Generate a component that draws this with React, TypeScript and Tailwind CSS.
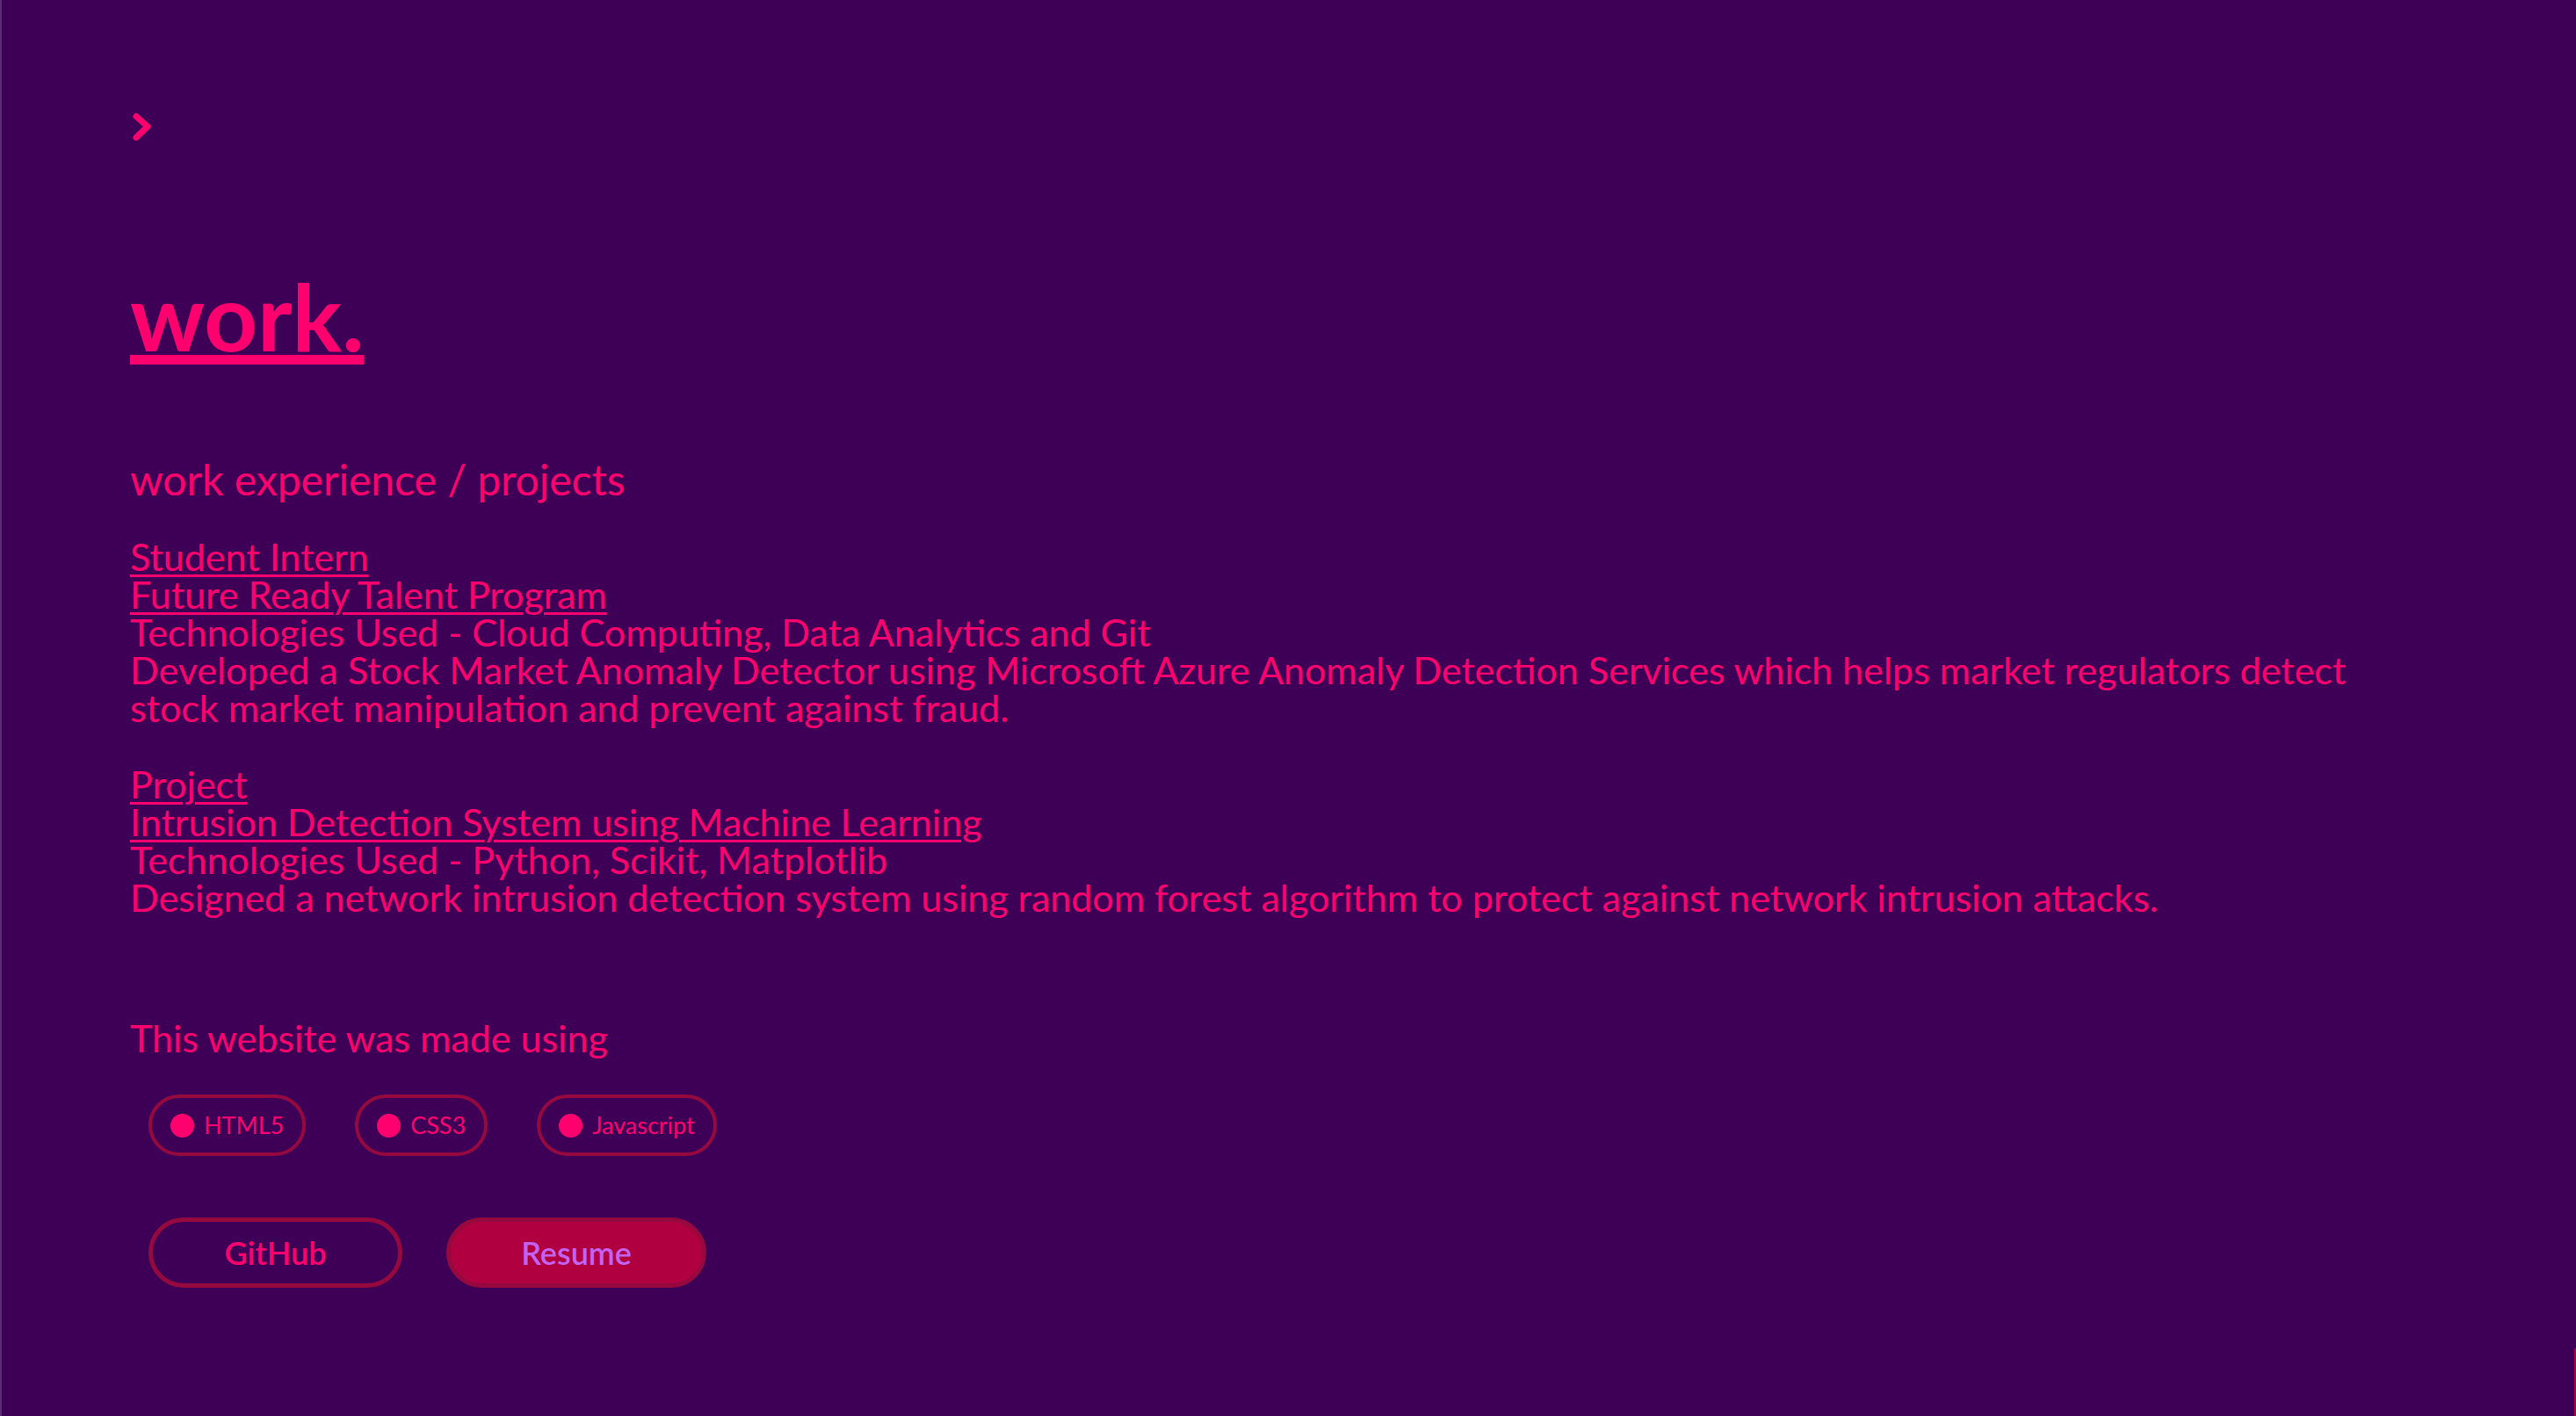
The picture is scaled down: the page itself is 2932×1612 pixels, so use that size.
import React from 'react';

const pink = 'text-[#ff006e]';

const techs = ['HTML5', 'CSS3', 'Javascript'];

const Entry = ({ role, title, tech, desc }: { role: string; title: string; tech: string; desc: string }) => (
  <div className="text-[43px] leading-[43px]">
    <a href="#" className="block w-fit underline decoration-[3px] underline-offset-[4px]">
      {role}
    </a>
    <a href="#" className="block w-fit underline decoration-[3px] underline-offset-[4px]">
      {title}
    </a>
    <p>{tech}</p>
    <p>{desc}</p>
  </div>
);

export default function App() {
  return (
    <div
      className={`relative min-h-screen bg-[#3e0057] border-l-2 border-[#5a2a72] pl-[146px] pt-[128px] pb-[60px] ${pink}`}
      style={{ fontFamily: 'Lato, "Noto Sans", sans-serif' }}
    >
      {/* menu toggle */}
      <button className="block">
        <svg width="24" height="32" viewBox="0 0 24 32" fill="none">
          <path d="M7 4.5 L20 16 L7 28.5" stroke="#ff006e" strokeWidth="7" strokeLinecap="round" strokeLinejoin="round" />
        </svg>
      </button>

      <h1 className="mt-[146px] text-[106px] leading-none font-bold underline decoration-[11px] underline-offset-[4px] w-fit">
        work.
      </h1>

      <h2 className="mt-[110px] text-[48px] leading-none">work experience / projects</h2>

      <div className="mt-[42px] max-w-[2590px] flex flex-col gap-[44px]">
        <Entry
          role="Student Intern"
          title="Future Ready Talent Program"
          tech="Technologies Used - Cloud Computing, Data Analytics and Git"
          desc="Developed a Stock Market Anomaly Detector using Microsoft Azure Anomaly Detection Services which helps market regulators detect stock market manipulation and prevent against fraud."
        />
        <Entry
          role="Project"
          title="Intrusion Detection System using Machine Learning"
          tech="Technologies Used - Python, Scikit, Matplotlib"
          desc="Designed a network intrusion detection system using random forest algorithm to protect against network intrusion attacks."
        />
      </div>

      <p className="mt-[117px] text-[43px] leading-[43px]">This website was made using</p>

      <div className="mt-[43px] ml-[21px] flex gap-[56px]">
        {techs.map((t) => (
          <span
            key={t}
            className="flex items-center gap-[11px] h-[70px] px-[21px] rounded-full border-4 border-[#96093f] text-[27px]"
          >
            <span className="w-[27px] h-[27px] rounded-full bg-[#ff006e]" />
            {t}
          </span>
        ))}
      </div>

      <div className="mt-[70px] ml-[21px] flex gap-[50px]">
        <a
          href="#"
          className="flex items-center justify-center w-[289px] h-[80px] rounded-full border-[5px] border-[#96093f] text-[36px] font-semibold"
        >
          GitHub
        </a>
        <a
          href="#"
          className="flex items-center justify-center w-[296px] h-[80px] rounded-full border-[5px] border-[#96093f] bg-[#b0003f] text-[36px] font-semibold text-[#c462f2]"
        >
          Resume
        </a>
      </div>

      <span className="absolute right-0 top-[1535px] bottom-0 w-[2px] bg-[#b0003f]" />
    </div>
  );
}
